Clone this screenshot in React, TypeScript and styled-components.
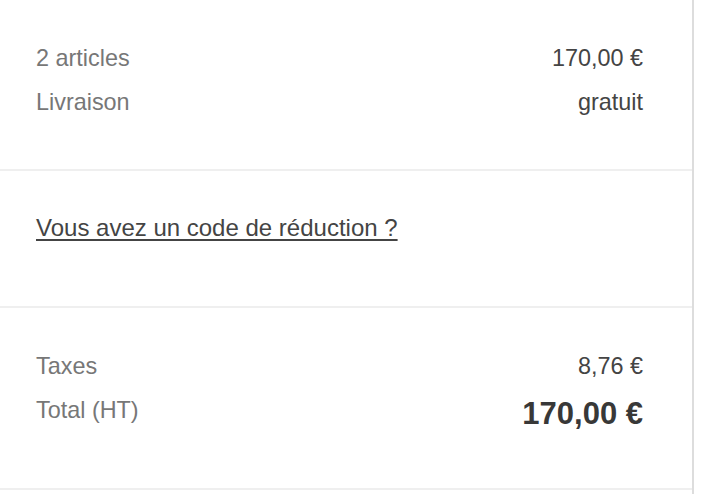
import styled, { createGlobalStyle } from "styled-components";

const GlobalStyle = createGlobalStyle`
    body {
        margin: 0;
        background: #fff;
        font-family: "Liberation Sans", Arial, sans-serif;
    }
`;

const Summary = styled.div`
    width: 694px;
    min-height: 494px;
    box-sizing: border-box;
    border-right: 2px solid #dddddd;
`;

const Section = styled.div<{ $top: number; $bottom: number }>`
    padding: ${(props) => `${props.$top}px 49px ${props.$bottom}px 36px`};
    border-bottom: 2px solid #efefef;
`;

const Row = styled.div`
    display: flex;
    justify-content: space-between;
    align-items: flex-start;
    font-size: 23.4px;
    line-height: 44px;
`;

const Label = styled.span`
    color: #777777;
`;

const Value = styled.span<{ $total?: boolean }>`
    color: ${(props) => (props.$total ? "#383838" : "#444444")};
    font-size: ${(props) => (props.$total ? "31px" : "inherit")};
    font-weight: ${(props) => (props.$total ? 700 : 400)};
    line-height: ${(props) => (props.$total ? "52px" : "inherit")};
`;

const PromoLink = styled.a`
    display: inline-block;
    color: #444444;
    font-size: 24px;
    line-height: 44px;
    text-decoration: underline;
    text-underline-offset: 3px;
    cursor: pointer;
`;

function App() {
    return (
        <>
            <GlobalStyle />
            <Summary>
                <Section $top={36} $bottom={45}>
                    <Row>
                        <Label>2 articles</Label>
                        <Value>170,00 €</Value>
                    </Row>
                    <Row>
                        <Label>Livraison</Label>
                        <Value>gratuit</Value>
                    </Row>
                </Section>
                <Section $top={35} $bottom={56}>
                    <PromoLink>Vous avez un code de réduction ?</PromoLink>
                </Section>
                <Section $top={36} $bottom={48}>
                    <Row>
                        <Label>Taxes</Label>
                        <Value>8,76 €</Value>
                    </Row>
                    <Row>
                        <Label>Total (HT)</Label>
                        <Value $total>170,00 €</Value>
                    </Row>
                </Section>
            </Summary>
        </>
    );
}

export default App;
